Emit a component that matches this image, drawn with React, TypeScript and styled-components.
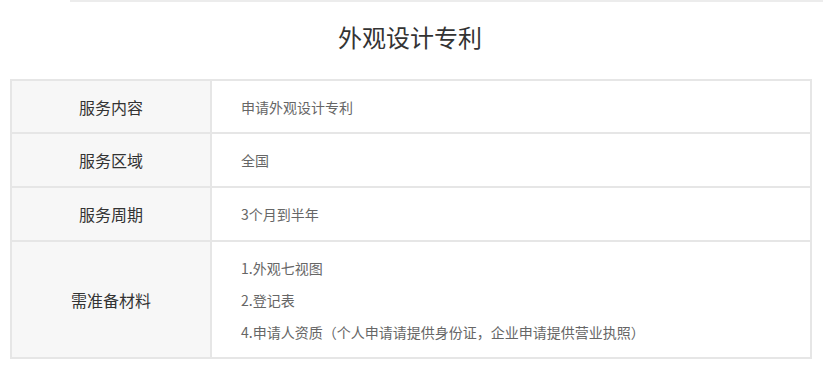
import React from "react";
import styled, { createGlobalStyle } from "styled-components";

const GlobalStyle = createGlobalStyle`
  html, body {
    margin: 0;
    padding: 0;
    background: #ffffff;
  }
  body {
    font-family: "Microsoft YaHei", "Noto Sans CJK SC", "Noto Sans", sans-serif;
  }
`;

const Page = styled.div`
  width: 823px;
  box-sizing: border-box;
`;

const TopRule = styled.div`
  height: 2px;
  margin-left: 70px;
  background: #ececec;
`;

const Title = styled.h2`
  margin: 0;
  height: 77px;
  line-height: 70px;
  text-align: center;
  font-size: 24px;
  font-weight: normal;
  color: #333333;
  padding-right: 3px;
`;

const TableWrap = styled.div`
  padding: 0 11px 0 10px;
`;

const Table = styled.table`
  width: 802px;
  border-collapse: collapse;
  border: 2px solid #e6e6e6;
  table-layout: fixed;
`;

const Row = styled.tr<{ $h: number }>`
  height: ${(p) => p.$h}px;
`;

const Label = styled.td`
  width: 198px;
  border: 2px solid #e6e6e6;
  background: #f7f7f7;
  text-align: center;
  vertical-align: middle;
  font-size: 16px;
  color: #333333;
  padding: 0;
`;

const Value = styled.td`
  border: 2px solid #e6e6e6;
  vertical-align: middle;
  font-size: 14px;
  color: #666666;
  padding: 0 0 0 29px;
`;

const Lines = styled.div`
  line-height: 32px;
`;

const rows: { label: string; value: string[]; h: number }[] = [
  { label: "服务内容", value: ["申请外观设计专利"], h: 53 },
  { label: "服务区域", value: ["全国"], h: 54 },
  { label: "服务周期", value: ["3个月到半年"], h: 54 },
  {
    label: "需准备材料",
    value: [
      "1.外观七视图",
      "2.登记表",
      "4.申请人资质（个人申请请提供身份证，企业申请提供营业执照）",
    ],
    h: 117,
  },
];

export default function App() {
  return (
    <Page>
      <GlobalStyle />
      <TopRule />
      <Title>外观设计专利</Title>
      <TableWrap>
        <Table>
          <tbody>
            {rows.map((r) => (
              <Row key={r.label} $h={r.h}>
                <Label>{r.label}</Label>
                <Value>
                  <Lines>
                    {r.value.map((v) => (
                      <div key={v}>{v}</div>
                    ))}
                  </Lines>
                </Value>
              </Row>
            ))}
          </tbody>
        </Table>
      </TableWrap>
    </Page>
  );
}
